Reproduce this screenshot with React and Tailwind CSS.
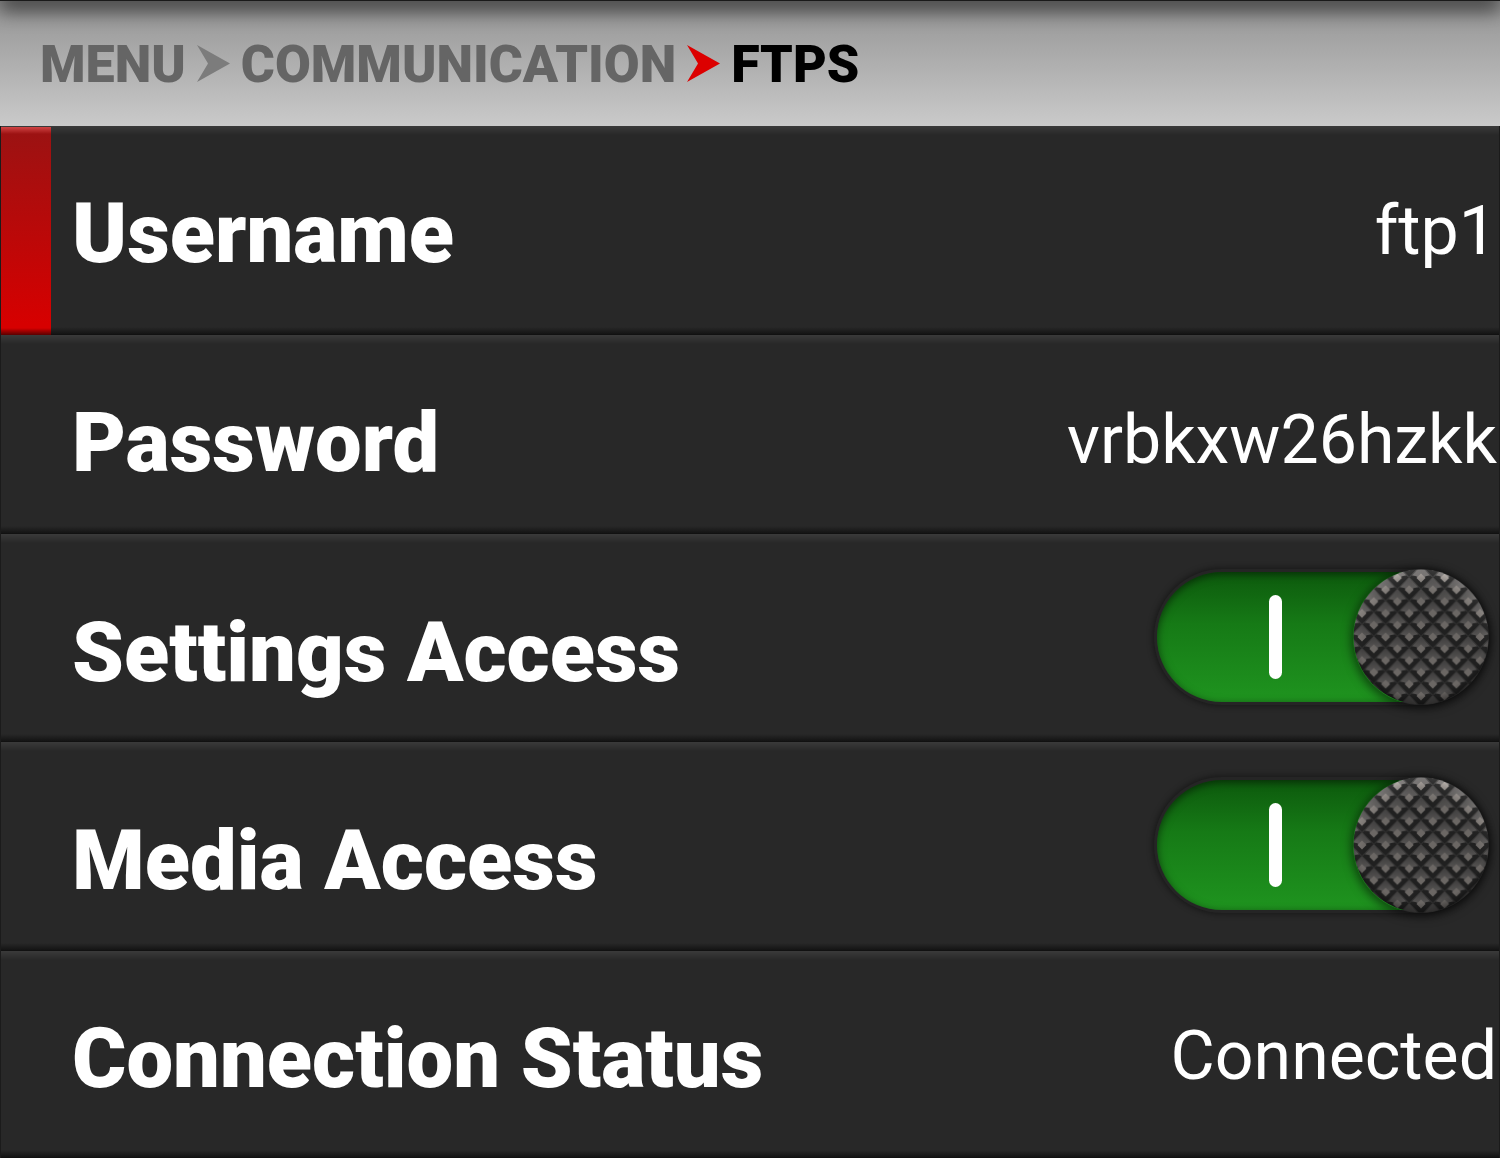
import React from "react";

const rows = [
  { id: "username", label: "Username", value: "ftp1", size: "min-h-[209px]", selected: true },
  { id: "password", label: "Password", value: "vrbkxw26hzkk", size: "min-h-[199px]" },
  { id: "settings", label: "Settings Access", toggle: true, size: "min-h-[208px]" },
  { id: "media", label: "Media Access", toggle: true, size: "min-h-[209px]" },
  { id: "status", label: "Connection Status", value: "Connected", size: "min-h-[207px]" },
];

function Arrow({ className }) {
  return (
    <svg viewBox="0 0 33 37" className={className} aria-hidden="true">
      <path d="M0 0 L33 18.5 L0 37 L11 18.5 Z" fill="currentColor" />
    </svg>
  );
}

function Knob({ id }) {
  const clip = id + "-clip";
  const tile = id + "-tile";
  const stud = id + "-stud";
  const face = id + "-face";
  const glow = id + "-glow";
  const shade = id + "-shade";
  return (
    <svg viewBox="0 0 136 136" className="isolate size-full" aria-hidden="true">
      <defs>
        <clipPath id={clip}>
          <circle cx="68" cy="68" r="67.5" />
        </clipPath>
        <linearGradient id={face} x1="0" y1="0" x2="0" y2="1">
          <stop offset="0" stopColor="#3e3d3d" />
          <stop offset="0.45" stopColor="#555352" />
          <stop offset="1" stopColor="#2a2a2a" />
        </linearGradient>
        <g id={stud}>
          <path d="M0 -11.8 L11.8 0 L0 11.8 L-11.8 0 Z" fill={"url(#" + face + ")"} />
          <path d="M-11.5 -0.5 L-9.5 -2.8 L-4.5 -1.8 L0 4.5 L4.5 -1.8 L9.5 -2.8 L11.5 -0.5 L0 10.5 Z" fill="#202020" />
          <path d="M0 -4.5 L4.5 0 L0 4.5 L-4.5 0 Z" fill="#6b6764" />
        </g>
        <pattern id={tile} width="23.6" height="23.6" patternUnits="userSpaceOnUse" patternTransform="translate(56.2 56.2)">
          <rect width="23.6" height="23.6" fill="#262626" />
          <use href={"#" + stud} x="11.8" y="0" />
          <use href={"#" + stud} x="11.8" y="23.6" />
          <use href={"#" + stud} x="0" y="11.8" />
          <use href={"#" + stud} x="23.6" y="11.8" />
        </pattern>
        <radialGradient id={glow} cx="0.5" cy="0.62" r="0.63">
          <stop offset="0.68" stopColor="#000" />
          <stop offset="0.85" stopColor="#333" />
          <stop offset="1" stopColor="#7a7a7a" />
        </radialGradient>
        <radialGradient id={shade} cx="0.5" cy="0.44" r="0.57">
          <stop offset="0.85" stopColor="#000" stopOpacity="0" />
          <stop offset="1" stopColor="#000" stopOpacity="0.5" />
        </radialGradient>
      </defs>
      <g clipPath={"url(#" + clip + ")"}>
        <rect width="136" height="136" fill={"url(#" + tile + ")"} />
        <rect width="136" height="136" fill={"url(#" + glow + ")"} className="mix-blend-color-dodge" />
        <rect width="136" height="136" fill={"url(#" + shade + ")"} />
      </g>
    </svg>
  );
}

function Toggle({ id }) {
  return (
    <span className="relative mt-[35px] mr-[10px] flex h-[136px] w-[335px] shrink-0 items-center justify-end rounded-full bg-[#252525] p-[3px] shadow-[0_0_6px_1px_rgba(0,0,0,0.45)]">
      <span className="flex h-full flex-1 items-center rounded-full bg-linear-to-b from-[#0d5a0d] via-[#167a16] via-40% to-[#1f941f] pl-[112px] shadow-[inset_0_2px_8px_rgba(0,0,0,0.55)]">
        <span className="h-[84px] w-[13px] rounded-full bg-white" />
      </span>
      <span className="absolute top-0 right-0 size-[136px] rounded-full shadow-[0_2px_10px_2px_rgba(0,0,0,0.5)]">
        <Knob id={id + "-knob"} />
      </span>
      <input
        id={id}
        type="checkbox"
        role="switch"
        defaultChecked
        className="absolute inset-0 cursor-pointer appearance-none rounded-full"
      />
    </span>
  );
}

function Row({ row }) {
  const Label = row.toggle ? "label" : "span";
  return (
    <li
      className={
        "relative flex items-start justify-between border-x border-[#1b1b1b] bg-[#282828] bg-[linear-gradient(to_bottom,#3a3a3a_0,#282828_9px,#282828_calc(100%-8px),#141414_calc(100%-1px),#0e0e0e_100%)] " +
        row.size
      }
    >
      {row.selected && (
        <span className="mt-px w-[50px] shrink-0 self-stretch bg-[linear-gradient(to_bottom,#d04444_0,#9c1212_7px,#d60000_calc(100%-12px),#d60000_calc(100%-7px),#5a0000_100%)]" />
      )}
      <Label
        htmlFor={row.toggle ? row.id : undefined}
        className={
          "flex-1 text-[83px] leading-[84px] font-black text-white " +
          (row.selected ? "pl-[21px] " : "pl-[71px] ") +
          (row.toggle ? "pt-[77px]" : "pt-[66px]")
        }
      >
        {row.label}
      </Label>
      {row.toggle ? (
        <Toggle id={row.id} />
      ) : (
        <span className="pt-[71px] pr-[2px] text-[68px] leading-[68px] text-white">{row.value}</span>
      )}
    </li>
  );
}

export default function App() {
  return (
    <main className="overflow-hidden font-['Roboto',sans-serif]">
      <header className="overflow-hidden border-t border-[#1a1a1a] bg-linear-to-b from-[#949494] to-[#cacaca]">
        <div className="mx-2 h-0 shadow-[0_0_20px_9px_rgba(0,0,0,0.65)]" />
        <nav aria-label="Breadcrumb" className="flex h-[125px] items-center pl-10 text-[52px] leading-[60px] font-black">
          <a href="#menu" className="pt-[2px] text-[#656565]">MENU</a>
          <Arrow className="mx-[11px] h-[37px] w-[33px] text-[#7c7c7c]" />
          <a href="#communication" className="pt-[2px] text-[#656565]">COMMUNICATION</a>
          <Arrow className="mx-[11px] h-[37px] w-[33px] text-[#dc0000]" />
          <span aria-current="page" className="pt-[2px] text-black">FTPS</span>
        </nav>
      </header>
      <ul>
        {rows.map((row) => (
          <Row key={row.id} row={row} />
        ))}
      </ul>
    </main>
  );
}
